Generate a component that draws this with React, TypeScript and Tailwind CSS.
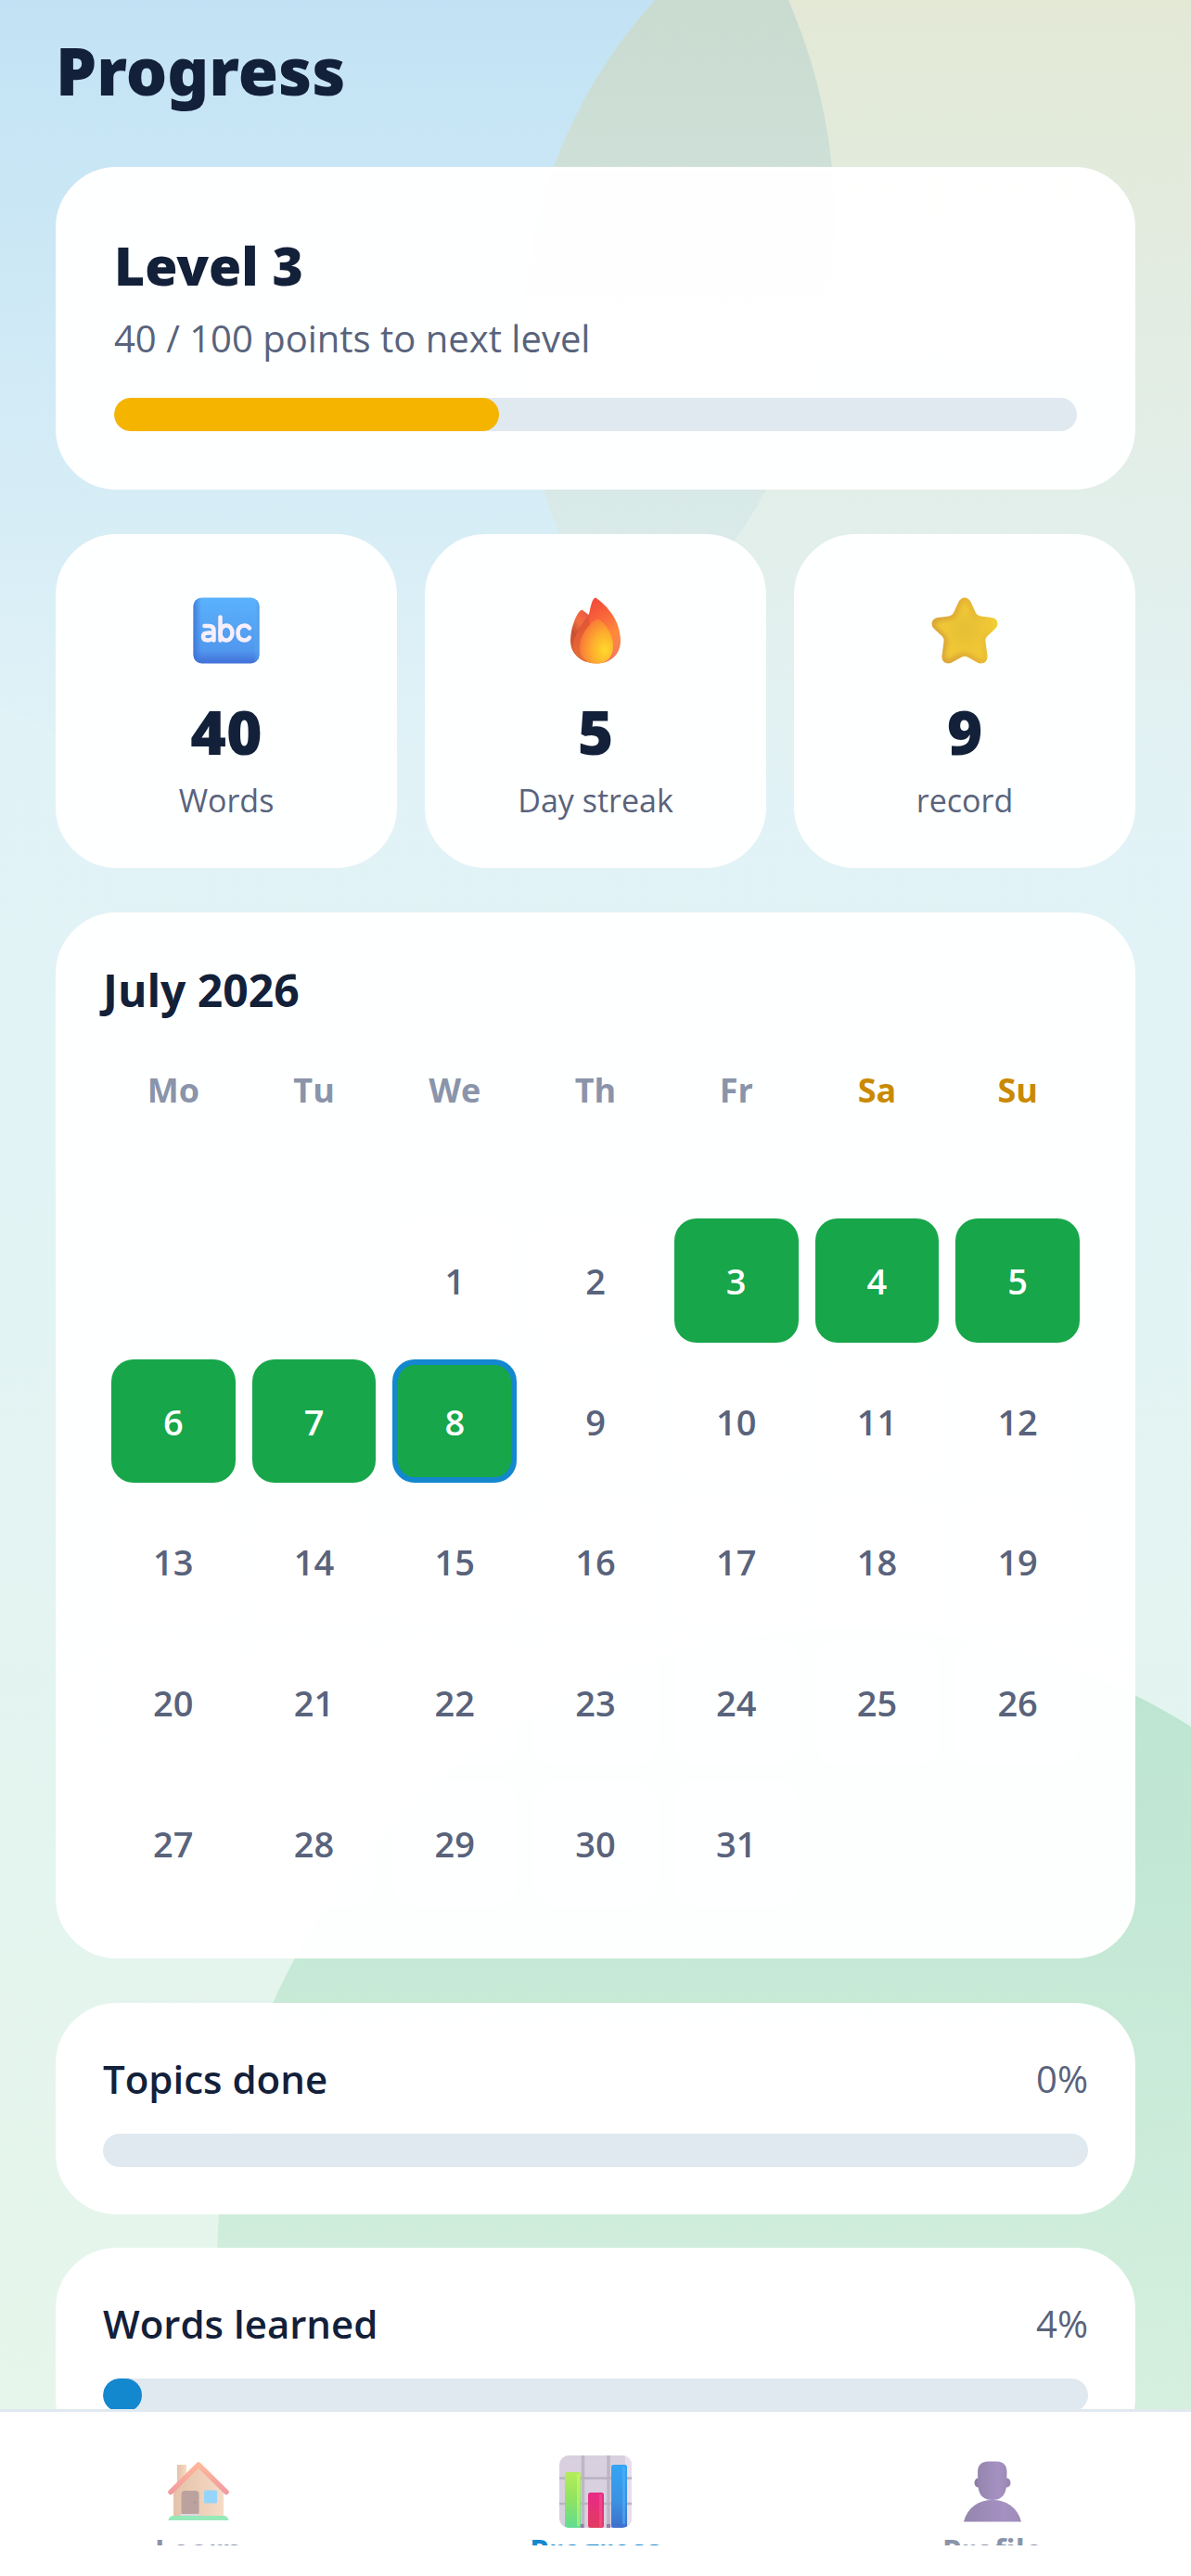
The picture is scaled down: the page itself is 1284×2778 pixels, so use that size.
import type { ReactNode } from 'react';

const WEEKDAYS = ['Mo', 'Tu', 'We', 'Th', 'Fr', 'Sa', 'Su'];
const FIRST_WEEKDAY = 2;
const DAYS_IN_MONTH = 31;
const ACTIVE_DAYS = [3, 4, 5, 6, 7, 8];
const TODAY = 8;

function Card({ className = '', children }: { className?: string; children: ReactNode }) {
  return (
    <section className={`rounded-[66px] border-[3px] border-white bg-white/97 ${className}`}>
      {children}
    </section>
  );
}

function ProgressBar({ label, value, fill }: { label: string; value: number; fill: string }) {
  return (
    <div
      role="progressbar"
      aria-label={label}
      aria-valuenow={value}
      aria-valuemin={0}
      aria-valuemax={100}
      className="h-9 overflow-hidden rounded-full bg-[#e1e9f0]"
    >
      <div className={`h-full rounded-full ${fill}`} style={{ width: `${value}%` }} />
    </div>
  );
}

function AbcIcon() {
  return (
    <svg viewBox="0 0 72 72" className="size-[72px]" aria-hidden="true">
      <defs>
        <linearGradient id="abc-face" x1="0" y1="0" x2="0" y2="1">
          <stop offset="0" stopColor="#5ab2fc" />
          <stop offset="0.8" stopColor="#5198ee" />
          <stop offset="1" stopColor="#416fd8" />
        </linearGradient>
        <linearGradient id="abc-edge" x1="0" y1="0" x2="1" y2="0">
          <stop offset="0" stopColor="#3d70d4" stopOpacity="0.8" />
          <stop offset="0.12" stopColor="#3d70d4" stopOpacity="0" />
          <stop offset="0.92" stopColor="#5ab8f8" stopOpacity="0" />
          <stop offset="1" stopColor="#4f96e4" stopOpacity="0.8" />
        </linearGradient>
      </defs>
      <rect x="0.5" y="0.5" width="71" height="71" rx="9" fill="url(#abc-face)" />
      <rect x="0.5" y="0.5" width="71" height="71" rx="9" fill="url(#abc-edge)" />
      <g fill="none" stroke="#f8effc" strokeWidth="4.5" strokeLinecap="round" strokeLinejoin="round">
        <path d="M12.500 31H17Q22.500 31 22.500 36V46.500M22.500 38.500H16.500Q11 38.500 11 42.500T16 46.500Q20.500 46.500 22.500 43" />
        <path d="M29.500 21.500V46.500" />
        <ellipse cx="36" cy="38.500" rx="6.500" ry="8" />
        <path d="M61 33.500Q59 30.500 55.500 30.500Q48.500 31 48.500 38.500T55.500 46.500Q59 46.500 61 43.500" />
      </g>
    </svg>
  );
}

function FlameIcon() {
  return (
    <svg viewBox="0 0 72 72" className="size-[72px]" aria-hidden="true">
      <defs>
        <linearGradient id="flame-outer" x1="0.2" y1="0" x2="0.7" y2="1">
          <stop offset="0" stopColor="#f0403c" />
          <stop offset="0.35" stopColor="#f8603a" />
          <stop offset="0.7" stopColor="#ff8a3c" />
          <stop offset="1" stopColor="#f47a5c" />
        </linearGradient>
        <linearGradient id="flame-left" x1="0" y1="1" x2="0.8" y2="0">
          <stop offset="0" stopColor="#e26a38" />
          <stop offset="0.4" stopColor="#c85030" />
          <stop offset="0.6" stopColor="#f0703e" />
          <stop offset="1" stopColor="#f0484a" />
        </linearGradient>
        <radialGradient id="flame-inner" cx="0.75" cy="0.7" r="0.75">
          <stop offset="0" stopColor="#ffd92c" />
          <stop offset="0.5" stopColor="#fdaf2d" />
          <stop offset="1" stopColor="#f87938" />
        </radialGradient>
      </defs>
      <path d="M22 14C18 12 9 31 9 47C9 61 20 71 36 71L42 30L26 17Z" fill="url(#flame-left)" />
      <path d="M36 0.500C32 2 31 10 29 18C25 29 11 39 12 54C14 65 24 71.500 37 71.500C53 71.500 63 61 63 47C63 26 49 9 36 0.500Z" fill="url(#flame-outer)" />
      <path d="M29 18C22 30 11 38 11 51C12 60 17 67 26 70L30 37Z" fill="#c84f30" opacity="0.45" />
      <path d="M38 23.500C35 23.500 19 38 19 54C19 65 26 71.500 37 71.500C48 71.500 55 64 55 53C55 38 43 24 38 23.500Z" fill="url(#flame-inner)" />
    </svg>
  );
}

function StarIcon() {
  return (
    <svg viewBox="0 0 72 72" className="size-[72px]" aria-hidden="true">
      <defs>
        <linearGradient id="star-edge" x1="0" y1="0.2" x2="1" y2="0">
          <stop offset="0" stopColor="#d8a638" />
          <stop offset="0.5" stopColor="#e4b236" />
          <stop offset="1" stopColor="#f3d832" />
        </linearGradient>
        <radialGradient id="star-face" cx="0.5" cy="0.5" r="0.5">
          <stop offset="0" stopColor="#e4bf35" />
          <stop offset="0.6" stopColor="#edc535" />
          <stop offset="1" stopColor="#f2c834" />
        </radialGradient>
        <filter id="star-soft" x="-20%" y="-20%" width="140%" height="140%">
          <feGaussianBlur stdDeviation="2" />
        </filter>
        <clipPath id="star-clip">
          <path d="M36 0.500Q40.500 0.500 43 6L48 17Q49.500 20 53 20.500L65 22Q71.500 23 71.500 29Q71.500 32 68.500 34.500L60 42.500Q58 45 58.500 48L60.500 63Q61 71.500 53 71.500Q51 71.500 48 69.500L39 64.500Q36 63 33 64.500L24 69.500Q21 71.500 18 71.500Q11 71 11.500 63L13.500 48Q14 45 12 42.500L3.500 34.500Q0.500 32 0.500 28.500Q1 23 7 22L19 20.500Q22.500 20 24 17L29 6Q31.500 0.500 36 0.500Z" />
        </clipPath>
      </defs>
      <g clipPath="url(#star-clip)">
        <rect width="72" height="72" fill="url(#star-edge)" />
        <path
          d="M37 4Q40 9 42 15Q44 23 50 24Q60 25 68 27Q67 31 61 36Q54 42 55 48L57 66Q53 68 46 63Q37 57 29 61L18 67Q14 66 16 58L18 48Q18 43 12 38L5 31Q4 27 12 26L23 24Q28 22 30 16Q33 7 37 4Z"
          fill="url(#star-face)"
          filter="url(#star-soft)"
        />
      </g>
    </svg>
  );
}

function HouseIcon() {
  return (
    <svg viewBox="0 0 66 66" className="size-[66px] opacity-55" aria-hidden="true">
      <defs>
        <linearGradient id="house-wall" x1="0" y1="0" x2="1" y2="0">
          <stop offset="0" stopColor="#cf9265" />
          <stop offset="0.5" stopColor="#e0a67c" />
          <stop offset="1" stopColor="#eec09a" />
        </linearGradient>
        <linearGradient id="house-roof" x1="0" y1="0" x2="0" y2="1">
          <stop offset="0" stopColor="#ff7e48" />
          <stop offset="1" stopColor="#e84a52" />
        </linearGradient>
      </defs>
      <path d="M10 4H20V26L10 34Z" fill="url(#house-wall)" />
      <path d="M6 31L33 7L60 31V60H6Z" fill="url(#house-wall)" />
      <path d="M3 33.500L33 4L63 33.500" fill="none" stroke="url(#house-roof)" strokeWidth="5.500" strokeLinecap="round" strokeLinejoin="round" />
      <rect x="14.500" y="32" width="19" height="27" rx="4" fill="#855750" />
      <circle cx="29" cy="44.500" r="1.500" fill="#6b3f3c" />
      <path d="M14 57H34L36 60H12Z" fill="#c4b8c8" />
      <rect x="39" y="31.500" width="14" height="14" rx="1.500" fill="#3fb4f8" />
      <path d="M5 59H61Q65 60 65.500 64H0.500Q1 60 5 59Z" fill="#43d880" />
    </svg>
  );
}

function ChartIcon() {
  return (
    <svg viewBox="0 0 78 78" className="size-[78px]" aria-hidden="true">
      <defs>
        <linearGradient id="chart-green" x1="0" y1="0" x2="0" y2="1">
          <stop offset="0" stopColor="#b5ec58" />
          <stop offset="0.5" stopColor="#8ee362" />
          <stop offset="1" stopColor="#60dd92" />
        </linearGradient>
        <linearGradient id="chart-pink" x1="0" y1="0" x2="0" y2="1">
          <stop offset="0" stopColor="#e82a87" />
          <stop offset="1" stopColor="#e13b61" />
        </linearGradient>
        <linearGradient id="chart-blue" x1="0" y1="0" x2="0" y2="1">
          <stop offset="0" stopColor="#34a5f5" />
          <stop offset="0.6" stopColor="#3b90e0" />
          <stop offset="1" stopColor="#3d70cb" />
        </linearGradient>
        <clipPath id="chart-clip">
          <rect width="78" height="78" rx="10" />
        </clipPath>
      </defs>
      <g clipPath="url(#chart-clip)">
        <rect width="78" height="78" fill="#d8d0df" />
        <rect x="71" width="7" height="78" fill="#e9deee" />
        <path d="M25.500 0V78M53 0V78" stroke="#bdb6c4" strokeWidth="3.500" />
        <path d="M0 24.500H78M0 52H78" stroke="#b9b2c0" strokeWidth="2.500" />
        <path d="M24.500 74V78M53 74V78" stroke="#927aa8" strokeWidth="4" />
        <rect x="6" y="18" width="17" height="60" rx="2.500" fill="url(#chart-green)" />
        <rect x="19" y="20" width="3" height="56" fill="#d2fb74" opacity="0.5" />
        <rect x="31" y="40" width="17" height="38" rx="2.500" fill="url(#chart-pink)" />
        <rect x="43" y="42" width="3" height="35" fill="#ff539b" opacity="0.5" />
        <rect x="56" y="10" width="17" height="68" rx="2.500" fill="url(#chart-blue)" />
        <rect x="68" y="12" width="3" height="62" fill="#53b8ff" opacity="0.5" />
      </g>
    </svg>
  );
}

function PersonIcon() {
  return (
    <svg viewBox="0 0 66 66" className="size-[66px]" aria-hidden="true">
      <defs>
        <linearGradient id="person-fill" x1="0" y1="0" x2="1" y2="0">
          <stop offset="0" stopColor="#9585ad" />
          <stop offset="0.7" stopColor="#a591c2" />
          <stop offset="1" stopColor="#9d8bb6" />
        </linearGradient>
      </defs>
      <ellipse cx="17.500" cy="23.500" rx="4" ry="5" fill="#8e7ca6" />
      <ellipse cx="48.500" cy="23.500" rx="4" ry="5" fill="#9a87b4" />
      <path d="M28 0.500H38Q48.500 1 48.500 12L48 28Q46 42 33 42Q19 42 17.500 28L17 12Q17 1 28 0.500Z" fill="url(#person-fill)" />
      <path d="M2 65.500C6 50 18 42 33 42S60 50 64 65.500Z" fill="url(#person-fill)" />
    </svg>
  );
}

const STATS = [
  { icon: <AbcIcon />, value: 40, label: 'Words' },
  { icon: <FlameIcon />, value: 5, label: 'Day streak' },
  { icon: <StarIcon />, value: 9, label: 'record' },
];

const GOALS = [
  { label: 'Topics done', value: 0 },
  { label: 'Words learned', value: 4 },
];

const TABS = [
  { icon: <HouseIcon />, label: 'Learn', active: false },
  { icon: <ChartIcon />, label: 'Progress', active: true },
  { icon: <PersonIcon />, label: 'Profile', active: false },
];

function Backdrop() {
  return (
    <div className="absolute inset-0 overflow-hidden bg-linear-to-b from-[#e0f2fb] via-[#e2f3f6] via-40% to-[#e6f6e9]">
      <div className="absolute -top-[360px] -left-[300px] size-[1200px] rounded-full bg-linear-to-b from-[#1388ce]/21 to-[#1388ce]/0" />
      <div className="absolute -top-[180px] left-[563px] size-[1100px] rounded-full bg-linear-to-b from-[#f5b400]/18 to-[#f5b400]/0" />
      <div className="absolute top-[1756px] left-[234px] size-[1368px] rounded-full bg-linear-to-b from-[#16a64a]/20 to-[#16a64a]/0" />
    </div>
  );
}

function Calendar() {
  const days = Array.from({ length: DAYS_IN_MONTH }, (_, i) => i + 1);

  return (
    <Card className="mt-12 px-12 pt-12 pb-[45px]">
      <h2 className="text-[48px] leading-[66px] font-bold">July 2026</h2>
      <div className="mt-12 grid grid-cols-7 text-center text-[36px] leading-[54px] font-bold text-[#8a94aa]">
        {WEEKDAYS.map((name, i) => (
          <span key={name} className={i > 4 ? 'text-[#c98a00]' : ''}>
            {name}
          </span>
        ))}
      </div>
      <div className="mt-[102px] grid grid-cols-7">
        {days.map((day) => {
          const active = ACTIVE_DAYS.includes(day);
          return (
            <div
              key={day}
              className="aspect-square p-[9px]"
              style={day === 1 ? { gridColumnStart: FIRST_WEEKDAY + 1 } : undefined}
            >
              <div
                className={`flex h-full items-center justify-center rounded-3xl text-[38px] leading-[54px] font-semibold ${
                  active ? 'bg-[#17a64a] text-white' : 'bg-white/60 text-[#59637c]'
                } ${day === TODAY ? 'border-[6px] border-[#1388ce]' : ''}`}
              >
                {day}
              </div>
            </div>
          );
        })}
      </div>
    </Card>
  );
}

export default function App() {
  return (
    <div className="relative flex h-screen flex-col overflow-hidden font-['Open_Sans','Noto_Sans',sans-serif] text-[#132039]">
      <Backdrop />

      <main className="relative min-h-0 flex-1 overflow-hidden px-[60px] pt-[27px]">
        <h1 className="font-['Noto_Sans',sans-serif] text-[70px] leading-[99px] font-black">Progress</h1>

        <Card className="mt-[54px] p-[60px]">
          <h2 className="font-['Noto_Sans',sans-serif] text-[57px] leading-[86px] font-black">Level 3</h2>
          <p className="mb-7 text-[40px] leading-[72px] text-[#59637c]">40 / 100 points to next level</p>
          <ProgressBar label="Points to next level" value={40} fill="bg-[#f5b400]" />
        </Card>

        <div className="mt-12 grid grid-cols-3 gap-[30px]">
          {STATS.map((stat) => (
            <Card key={stat.label} className="flex flex-col items-center pt-[65px] pb-10">
              {stat.icon}
              <span className="mt-[27px] font-['Noto_Sans',sans-serif] text-[66px] leading-[90px] font-black">
                {stat.value}
              </span>
              <span className="text-[34px] leading-[60px] text-[#59637c]">{stat.label}</span>
            </Card>
          ))}
        </div>

        <Calendar />

        <div className="mt-12 flex flex-col gap-9">
          {GOALS.map((goal) => (
            <Card key={goal.label} className="px-12 pt-[46px] pb-12">
              <div className="mb-[26px] flex items-center justify-between leading-[66px]">
                <h3 className="text-[42px] font-semibold">{goal.label}</h3>
                <span className="text-[40px] text-[#59637c]">{goal.value}%</span>
              </div>
              <ProgressBar label={goal.label} value={goal.value} fill="bg-[#1388ce]" />
            </Card>
          ))}
        </div>
      </main>

      <nav className="relative h-[180px] shrink-0 border-t-[3px] border-[#e1e9f0] bg-white pb-[33px]">
        <div className="grid h-full grid-cols-3 overflow-hidden">
          {TABS.map((tab) => (
            <button
              key={tab.label}
              type="button"
              aria-current={tab.active ? 'page' : undefined}
              className={`flex flex-col items-center justify-start pt-[45px] text-[33px] leading-[46px] font-bold ${
                tab.active ? 'text-[#1388ce]' : 'text-[#8a94aa]'
              }`}
            >
              <span className="flex h-[81px] shrink-0 items-center">{tab.icon}</span>
              {tab.label}
            </button>
          ))}
        </div>
      </nav>
    </div>
  );
}
